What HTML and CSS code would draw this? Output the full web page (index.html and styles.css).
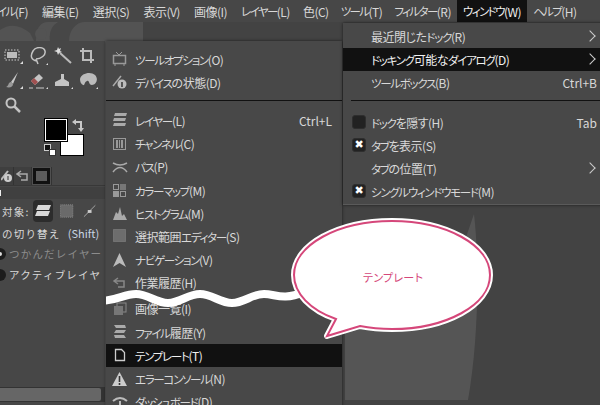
FILE: index.html
```html
<!DOCTYPE html>
<html lang="ja">
<head>
    <meta charset="UTF-8">
    <title>ウィンドウメニュー</title>
    <link rel="stylesheet" href="styles.css">
</head>
<body>
    <div class="app">
        <!-- Menu bar -->
        <div class="menubar">
            <span class="barItem cutLeft"><span class="k">イル</span>(F)</span>
            <span class="barItem">編集(E)</span>
            <span class="barItem">選択(S)</span>
            <span class="barItem">表示(V)</span>
            <span class="barItem">画像(I)</span>
            <span class="barItem"><span class="k">レイヤー</span>(L)</span>
            <span class="barItem tight">色(C)</span>
            <span class="barItem tight"><span class="k">ツール</span>(T)</span>
            <span class="barItem tight"><span class="k">フィルター</span>(R)</span>
            <span class="barItem tight active"><span class="k">ウィンドウ</span>(W)</span>
            <span class="barItem tight"><span class="k">ヘルプ</span>(H)</span>
        </div>

        <!-- Left dock -->
        <div class="dock">
            <svg class="logo" width="145" height="19" viewBox="0 0 145 19">
                <path d="M0 19V8q14-10 30 3l4 8z M36 19q0-19 12-19h10q-10 6-8 19z M69 19c0-10 7-19 15-19h10v-0h49v19z" fill="#535353"/>
                <circle cx="41" cy="12" r="6" fill="#535353"/>
            </svg>
            <div class="tools">
                <svg class="tool" viewBox="0 0 20 20"><rect x="2" y="3" width="14" height="10" fill="none" stroke="#ccc" stroke-dasharray="1.5 1.5"/><rect x="4" y="5" width="10" height="6" fill="#bbb"/><path d="M17 17h3v-3z" fill="#ddd"/></svg>
                <svg class="tool" viewBox="0 0 20 20"><path d="M9 14C3 13 2 9 5 4s11-4 12 0-4 8-9 8M8 12l2 5" fill="none" stroke="#c4c4c4" stroke-width="1.5"/><path d="M18 18h3v-3z" fill="#ddd"/></svg>
                <svg class="tool" viewBox="0 0 20 20"><path d="M7 6l11 10" stroke="#bbb" stroke-width="2"/><path d="M5 0l1 2 2-1-1 3 2 1-3 1-1 2-1-3-3-1 3-1z" fill="#ddd"/></svg>
                <svg class="tool" viewBox="0 0 20 20"><path d="M5 1v12h11M2 4h11v12" fill="none" stroke="#bbb" stroke-width="2"/></svg>
                <svg class="tool" viewBox="0 0 20 20"><path d="M15 1L8 11l2 2z" fill="#c8c8c8"/><path d="M8 11c-3 0-2 4-5 5 4 1 7 0 7-3z" fill="#999"/><path d="M17 18h3v-3z" fill="#ddd"/></svg>
                <svg class="tool" viewBox="0 0 20 20"><path d="M3 10l8-7 4 4-8 7z" fill="#c4c4c4"/><path d="M3 10l3-3 4 4-3 3z" fill="#a05050"/><path d="M1 17h4M8 17h8" stroke="#ccc"/><path d="M18 18h2v-2z" fill="#ddd"/></svg>
                <svg class="tool" viewBox="0 0 20 20"><path d="M8 3h3v5l5 3v4H2v-4l6-3z" fill="#c4c4c4"/><path d="M18 18h2v-2z" fill="#ddd"/></svg>
                <svg class="tool" viewBox="0 0 20 20"><path d="M2 8C3 2 13 0 17 4s1 10-3 10-2-5-5-4-2 5-4 4-3-3-3-6z" fill="#bbb"/><path d="M18 18h2v-2z" fill="#ddd"/></svg>
                <svg class="tool" viewBox="0 0 20 20"><circle cx="8" cy="8" r="4.5" fill="none" stroke="#c4c4c4" stroke-width="2"/><path d="M11 11l6 6" stroke="#c4c4c4" stroke-width="2.5"/></svg>
            </div>
            <div class="colors">
                <div class="swatch bg"></div>
                <div class="swatch fg"></div>
                <div class="mini miniBlack"></div>
                <div class="mini miniWhite"></div>
                <svg class="swap" width="12" height="14" viewBox="0 0 12 14"><path d="M0 3l4-3v2h6v7h2l-3 4-3-4h2V4H4v2z" fill="#c8c8c8"/></svg>
            </div>
            <div class="tabs">
                <div class="tab tabFirst"><svg width="12" height="14" viewBox="0 0 12 14"><path d="M0 11L7 2" stroke="#bbb" stroke-width="2"/><circle cx="7" cy="9" r="4" fill="#ccc"/><path d="M7 7v4" stroke="#333"/></svg></div>
                <div class="tab"><svg width="14" height="12" viewBox="0 0 14 12"><path d="M5 1L1 4l4 3M1 4h10v6H5" fill="none" stroke="#aaa" stroke-width="1.5"/></svg></div>
                <div class="tab tabOn"><div class="tabPic"></div></div>
            </div>
            <div class="panelHead"><span class="panelMark"></span></div>
            <div class="options">
                <div class="optRow">
                    <span class="spaced">対象:</span>
                    <span class="modeBtn"><svg width="16" height="12" viewBox="0 0 16 12"><path d="M3 0h13l-2 5H1zM2 6h13l-2 5H0z" fill="#d8d8d8"/></svg></span>
                    <svg class="modeIcon" width="14" height="14" viewBox="0 0 14 14"><rect x=".5" y=".5" width="13" height="13" fill="#6a6a6a" stroke="#8a8a8a" stroke-dasharray="1 1"/></svg>
                    <svg class="modeIcon" width="14" height="14" viewBox="0 0 14 14"><path d="M1 13L13 1" stroke="#aaa"/><rect x="5" y="6" width="4" height="3" fill="#ccc"/></svg>
                </div>
                <div class="optText"><span class="spaced">の切り替え</span> <span class="shift">(Shift)</span></div>
                <div class="radio dim"><span class="dot dotOn"></span><span class="spaced">つかんだレイヤー</span></div>
                <div class="radio"><span class="dot"></span><span class="spaced">アクティブレイヤ</span></div>
            </div>
            <div class="bottomBar"><div class="bottomFill"></div></div>
        </div>

        <!-- Behind the menus -->
        <svg class="behind" width="258" height="195" viewBox="0 0 258 195"><path d="M3 0H3V195H126C136 140 138 60 132 9L122 38L3 110z" fill="#555"/></svg>

        <!-- Dialog list menu -->
        <div class="popup leftMenu">
            <div class="item"><svg class="ico" viewBox="0 0 16 16"><rect x="1.5" y="4.5" width="12" height="8" fill="none" stroke="#999" stroke-width="1.5"/><path d="M4 1l3 3M10 1L7 4M3 13v2M12 13v2" stroke="#999"/></svg><span><span class="k">ツールオプション</span>(O)</span></div>
            <div class="item"><svg class="ico" viewBox="0 0 16 16"><path d="M1 12L9 2" stroke="#aaa" stroke-width="1.5"/><circle cx="10" cy="10" r="4.5" fill="#bbb"/><path d="M10 8v5" stroke="#333" stroke-width="1.5"/></svg><span><span class="k">デバイス</span>の状態(D)</span></div>
            <div class="sep"></div>
            <div class="item"><svg class="ico" viewBox="0 0 16 16"><path d="M3 1h12l-1 3H2zM2 6h12l-1 3H1zM2 11h12l-1 3H1z" fill="#aaa"/></svg><span><span class="k">レイヤー</span>(L)</span><span class="keys">Ctrl+L</span></div>
            <div class="item"><svg class="ico" viewBox="0 0 16 16"><rect x="1.5" y="2.5" width="12" height="11" fill="none" stroke="#999"/><path d="M4 4h2v8H4zM7 4h1v8H7zM9 4h2v8H9z" fill="#999"/></svg><span><span class="k">チャンネル</span>(C)</span></div>
            <div class="item"><svg class="ico" viewBox="0 0 16 16"><path d="M1 4q7 4 14 0M1 13q7-9 14 0" fill="none" stroke="#aaa" stroke-width="1.5"/></svg><span><span class="k">パス</span>(P)</span></div>
            <div class="item"><svg class="ico" viewBox="0 0 16 16"><rect x="1.5" y="2.5" width="5" height="5" fill="none" stroke="#999"/><rect x="8" y="2" width="6" height="6" fill="#777"/><rect x="1" y="9" width="6" height="6" fill="#999"/><rect x="8.5" y="9.5" width="5" height="5" fill="none" stroke="#999"/></svg><span><span class="k">カラーマップ</span>(M)</span></div>
            <div class="item"><svg class="ico" viewBox="0 0 16 16"><path d="M1 15l3-8 2 2 2-7 2 9 2-2 3 6z" fill="#aaa"/></svg><span><span class="k">ヒストグラム</span>(M)</span></div>
            <div class="item"><svg class="ico" viewBox="0 0 16 16"><rect x="1.5" y="1.5" width="12" height="12" fill="#6d6d6d" stroke="#8a8a8a" stroke-dasharray="1 1"/></svg><span>選択範囲<span class="k">エディター</span>(S)</span></div>
            <div class="item"><svg class="ico" viewBox="0 0 16 16"><path d="M7.500 1L14 15l-6.500-4L1 15z" fill="#bbb"/></svg><span><span class="k">ナビゲーション</span>(V)</span></div>
            <div class="item"><svg class="ico" viewBox="0 0 16 16"><path d="M6 3L2 6l4 3M2 6h10v6H6" fill="none" stroke="#888" stroke-width="1.5"/></svg>作業履歴(H)</div>
            <div class="item afterWave"><svg class="ico" viewBox="0 0 16 16"><rect x="5" y="2" width="9" height="9" fill="none" stroke="#888"/><rect x="2" y="5" width="9" height="9" fill="#777"/></svg>画像一覧(I)</div>
            <div class="item"><svg class="ico" viewBox="0 0 16 16"><path d="M2 1h11l1 3H4zM4 6h10l-2 3H2zM2 11h10l2 3H3z" fill="#aaa"/></svg><span><span class="k">ファイル</span>履歴(Y)</span></div>
            <div class="item selected"><svg class="ico" viewBox="0 0 16 16"><path d="M3.500 2.500h6l3 3v8h-9z" fill="none" stroke="#ccc" stroke-width="1.300"/></svg><span><span class="k">テンプレート</span>(T)</span></div>
            <div class="item"><svg class="ico" viewBox="0 0 16 16"><path d="M7.500 1L15 15H0z" fill="#ccc"/><path d="M7.500 5v6M7.500 12v2" stroke="#333" stroke-width="1.600"/></svg><span><span class="k">エラーコンソール</span>(N)</span></div>
            <div class="item"><svg class="ico" viewBox="0 0 16 16"><path d="M1 7q7-6 14 0M8 7v8" fill="none" stroke="#bbb" stroke-width="2"/></svg><span><span class="k">ダッシュボード</span>(D)</span></div>
        </div>

        <!-- Window menu -->
        <div class="popup rightMenu">
            <div class="item"><span>最近閉じた<span class="k">ドック</span>(R)</span><span class="arrow"></span></div>
            <div class="item selected"><span><span class="k">ドッキング</span>可能な<span class="k">ダイアログ</span>(D)</span><span class="arrow"></span></div>
            <div class="item"><span><span class="k">ツールボックス</span>(B)</span><span class="keys">Ctrl+B</span></div>
            <div class="sep"></div>
            <div class="item"><span class="check"></span><span><span class="k">ドック</span>を隠す(H)</span><span class="keys">Tab</span></div>
            <div class="item"><span class="check on">✖</span><span><span class="k">タブ</span>を表示(S)</span></div>
            <div class="item"><span><span class="k">タブ</span>の位置(T)</span><span class="arrow"></span></div>
            <div class="item"><span class="check on">✖</span><span><span class="k">シングルウィンドウモード</span>(M)</span></div>
        </div>

        <!-- Torn edge and speech bubble -->
        <svg class="wave" width="200" height="25" viewBox="106 285 200 25"><path d="M100 301C116 301 124 294 136 294S156 303 168 303 188 294 200 294 220 303 232 303 252 294 264 294 282 301 304 292" fill="none" stroke="#fff" stroke-width="8"/></svg>
        <svg class="bubble" width="216" height="136" viewBox="0 0 216 136">
            <path d="M104 4C158 4 202 28 202 58C202 88 158 112 104 112C92 112 82 111 72 109L39 119L48 102C22 93 6 76 6 58C6 28 50 4 104 4Z" fill="#fff" stroke="#fff" stroke-width="6" stroke-linejoin="round"/>
            <path d="M104 4C158 4 202 28 202 58C202 88 158 112 104 112C92 112 82 111 72 109L39 119L48 102C22 93 6 76 6 58C6 28 50 4 104 4Z" fill="#fff" stroke="#d5477a" stroke-width="2"/>
        </svg>
        <span class="bubbleText">テンプレート</span>
    </div>
</body>
</html>
```

FILE: styles.css
```css
body {
    margin: 0;
    background: #434343;
    font-family: "Noto Sans CJK JP", "Noto Sans", sans-serif;
    font-feature-settings: "palt";
    color: #d8d8d8;
    font-size: 12px;
    letter-spacing: -0.5px;
}

.app {
    position: relative;
    width: 600px;
    height: 405px;
    overflow: hidden;
    background: #434343;
}

/* katakana runs are narrow in the original UI font */
.k {
    font-size: 11.5px;
    letter-spacing: -1.3px;
}

/* Menu bar */
.menubar {
    display: flex;
    height: 22px;
    background: #474747;
    align-items: stretch;
}

.barItem {
    display: flex;
    align-items: center;
    padding: 0 7px;
    white-space: nowrap;
}

.barItem .k {
    letter-spacing: -1.600px;
}

.cutLeft {
    padding-left: 0;
    margin-left: -3px;
}

.tight {
    padding: 0 6px;
}

.barItem.active {
    background: #111;
    color: #eee;
}

/* Dock on the left */
.dock {
    width: 105px;
    height: 383px;
    box-sizing: content-box;
    border-right: 1px solid #575757;
    display: flex;
    flex-direction: column;
    background: #474747;
}

.logo {
    display: block;
    flex: none;
}

.tools {
    display: grid;
    grid-template-columns: repeat(4, 25px);
    grid-auto-rows: 24px;
    padding: 6px 0 0 3px;
    height: 74px;
}

.tool {
    width: 20px;
    height: 20px;
}

.colors {
    position: relative;
    height: 47px;
    margin-top: -1px;
}

.swatch {
    position: absolute;
    width: 22px;
    border: 1px solid #000;
}

.fg {
    left: 44px;
    top: -2px;
    height: 22px;
    background: #000;
    outline: 1px solid #fff;
    outline-offset: -2px;
}

.bg {
    left: 60px;
    top: 14px;
    height: 20px;
    background: #fff;
}

.mini {
    position: absolute;
    width: 5px;
    height: 5px;
    border: 1px solid #ccc;
}

.miniBlack {
    left: 44px;
    top: 24px;
    background: #111;
}

.miniWhite {
    left: 49px;
    top: 29px;
    background: #fff;
    border-color: #333;
}

.swap {
    position: absolute;
    left: 72px;
    top: -1px;
}

.tabs {
    display: flex;
    height: 18px;
    border-bottom: 1px solid #383838;
}

.tab {
    width: 17px;
    display: flex;
    align-items: center;
    justify-content: center;
    background: #3f3f3f;
    border-right: 1px solid #333;
}

.tabFirst {
    width: 13px;
    justify-content: flex-end;
}

.tabOn {
    width: 19px;
    background: #505050;
}

.tabPic {
    width: 11px;
    height: 10px;
    border: 2px solid #111;
    outline: 1px solid #111;
    background: #5c5c5c;
}

.panelHead {
    height: 12px;
    margin-top: 1px;
    background: #404040;
    display: flex;
    align-items: center;
}

.panelMark {
    width: 1px;
    height: 6px;
    background: #eee;
}

.options {
    padding: 1px 0 0 2px;
    white-space: nowrap;
    overflow: hidden;
    flex: 1;
}

.optRow {
    display: flex;
    align-items: center;
    height: 22px;
}

.spaced {
    font-feature-settings: normal;
    letter-spacing: 1.200px;
    font-size: 10.500px;
}

.modeBtn {
    display: flex;
    align-items: center;
    justify-content: center;
    width: 22px;
    height: 22px;
    margin: 0 7px 0 3px;
    background: #2c2c2c;
    border-radius: 4px;
}

.modeIcon {
    margin-right: 9px;
}

.optText {
    height: 20px;
    line-height: 20px;
    margin-top: 1px;
}

.shift {
    margin-left: 5px;
    font-size: 11px;
    letter-spacing: 0;
    color: #c8d4e4;
}

.radio {
    display: flex;
    align-items: center;
    gap: 3px;
    height: 21px;
    margin-left: -8px;
}

.dim {
    color: #8c8c8c;
}

.dot {
    width: 12px;
    height: 12px;
    border-radius: 50%;
    background: #1c1c1c;
    display: block;
    box-sizing: border-box;
    flex: none;
}

.dotOn {
    border: 4px solid #1c1c1c;
    background: #ddd;
}

.bottomBar {
    flex: none;
    height: 15px;
    margin-bottom: 3px;
    background: #333;
    padding: 1px 4px 1px 0;
    box-sizing: border-box;
}

.bottomFill {
    height: 100%;
    background: #666;
    border-radius: 0 2px 2px 0;
}

/* Popup menus */
.popup {
    position: absolute;
    box-sizing: border-box;
    background: #484848;
    box-shadow: 0 0 3px rgba(0, 0, 0, 0.6);
}

.leftMenu {
    left: 106px;
    top: 41px;
    width: 236px;
    height: 380px;
    padding-top: 7px;
}

.rightMenu {
    left: 343px;
    top: 23px;
    width: 260px;
    height: 182px;
    padding-top: 2px;
    border-bottom: 1px solid #5a5a5a;
}

.item {
    display: flex;
    align-items: center;
    height: 23px;
    padding-bottom: 1px;
    box-sizing: border-box;
    white-space: nowrap;
}

.leftMenu .item {
    height: 23.200px;
    padding-left: 6px;
}

.rightMenu .item {
    padding-left: 28px;
    position: relative;
}

.ico {
    width: 16px;
    height: 16px;
    margin-right: 7px;
    flex: none;
}

.selected {
    background: #111;
    color: #f0f0f0;
}

.sep {
    height: 1px;
    background: #111;
}

.leftMenu .sep {
    margin: 6px 0 8px 0;
}

.rightMenu .sep {
    margin: 6px 0 10px 8px;
}

.keys {
    margin-left: auto;
    padding-right: 10px;
    letter-spacing: 0;
}

.rightMenu .keys {
    padding-right: 6px;
}

.arrow {
    margin-left: auto;
    margin-right: 9px;
    width: 8px;
    height: 8px;
    box-sizing: border-box;
    border-top: 1.500px solid #ccc;
    border-right: 1.500px solid #ccc;
    transform: rotate(45deg);
}

.check {
    position: absolute;
    left: 9px;
    width: 12px;
    height: 12px;
    border-radius: 3px;
    background: #222;
    border: 1px solid #2e2e2e;
    color: #fff;
    font-size: 11px;
    line-height: 12px;
    text-align: center;
    letter-spacing: 0;
    font-family: "DejaVu Sans", sans-serif;
}

.afterWave {
    margin-top: 3px;
}

/* Things lying over the screenshot */
.behind {
    position: absolute;
    left: 342px;
    top: 205px;
}

.wave {
    position: absolute;
    left: 106px;
    top: 285px;
}

.bubble {
    position: absolute;
    left: 288px;
    top: 217px;
}

.bubbleText {
    position: absolute;
    left: 363px;
    top: 269px;
    color: #d5477a;
    font-size: 11px;
    letter-spacing: 0.3px;
    line-height: 16px;
}
```
